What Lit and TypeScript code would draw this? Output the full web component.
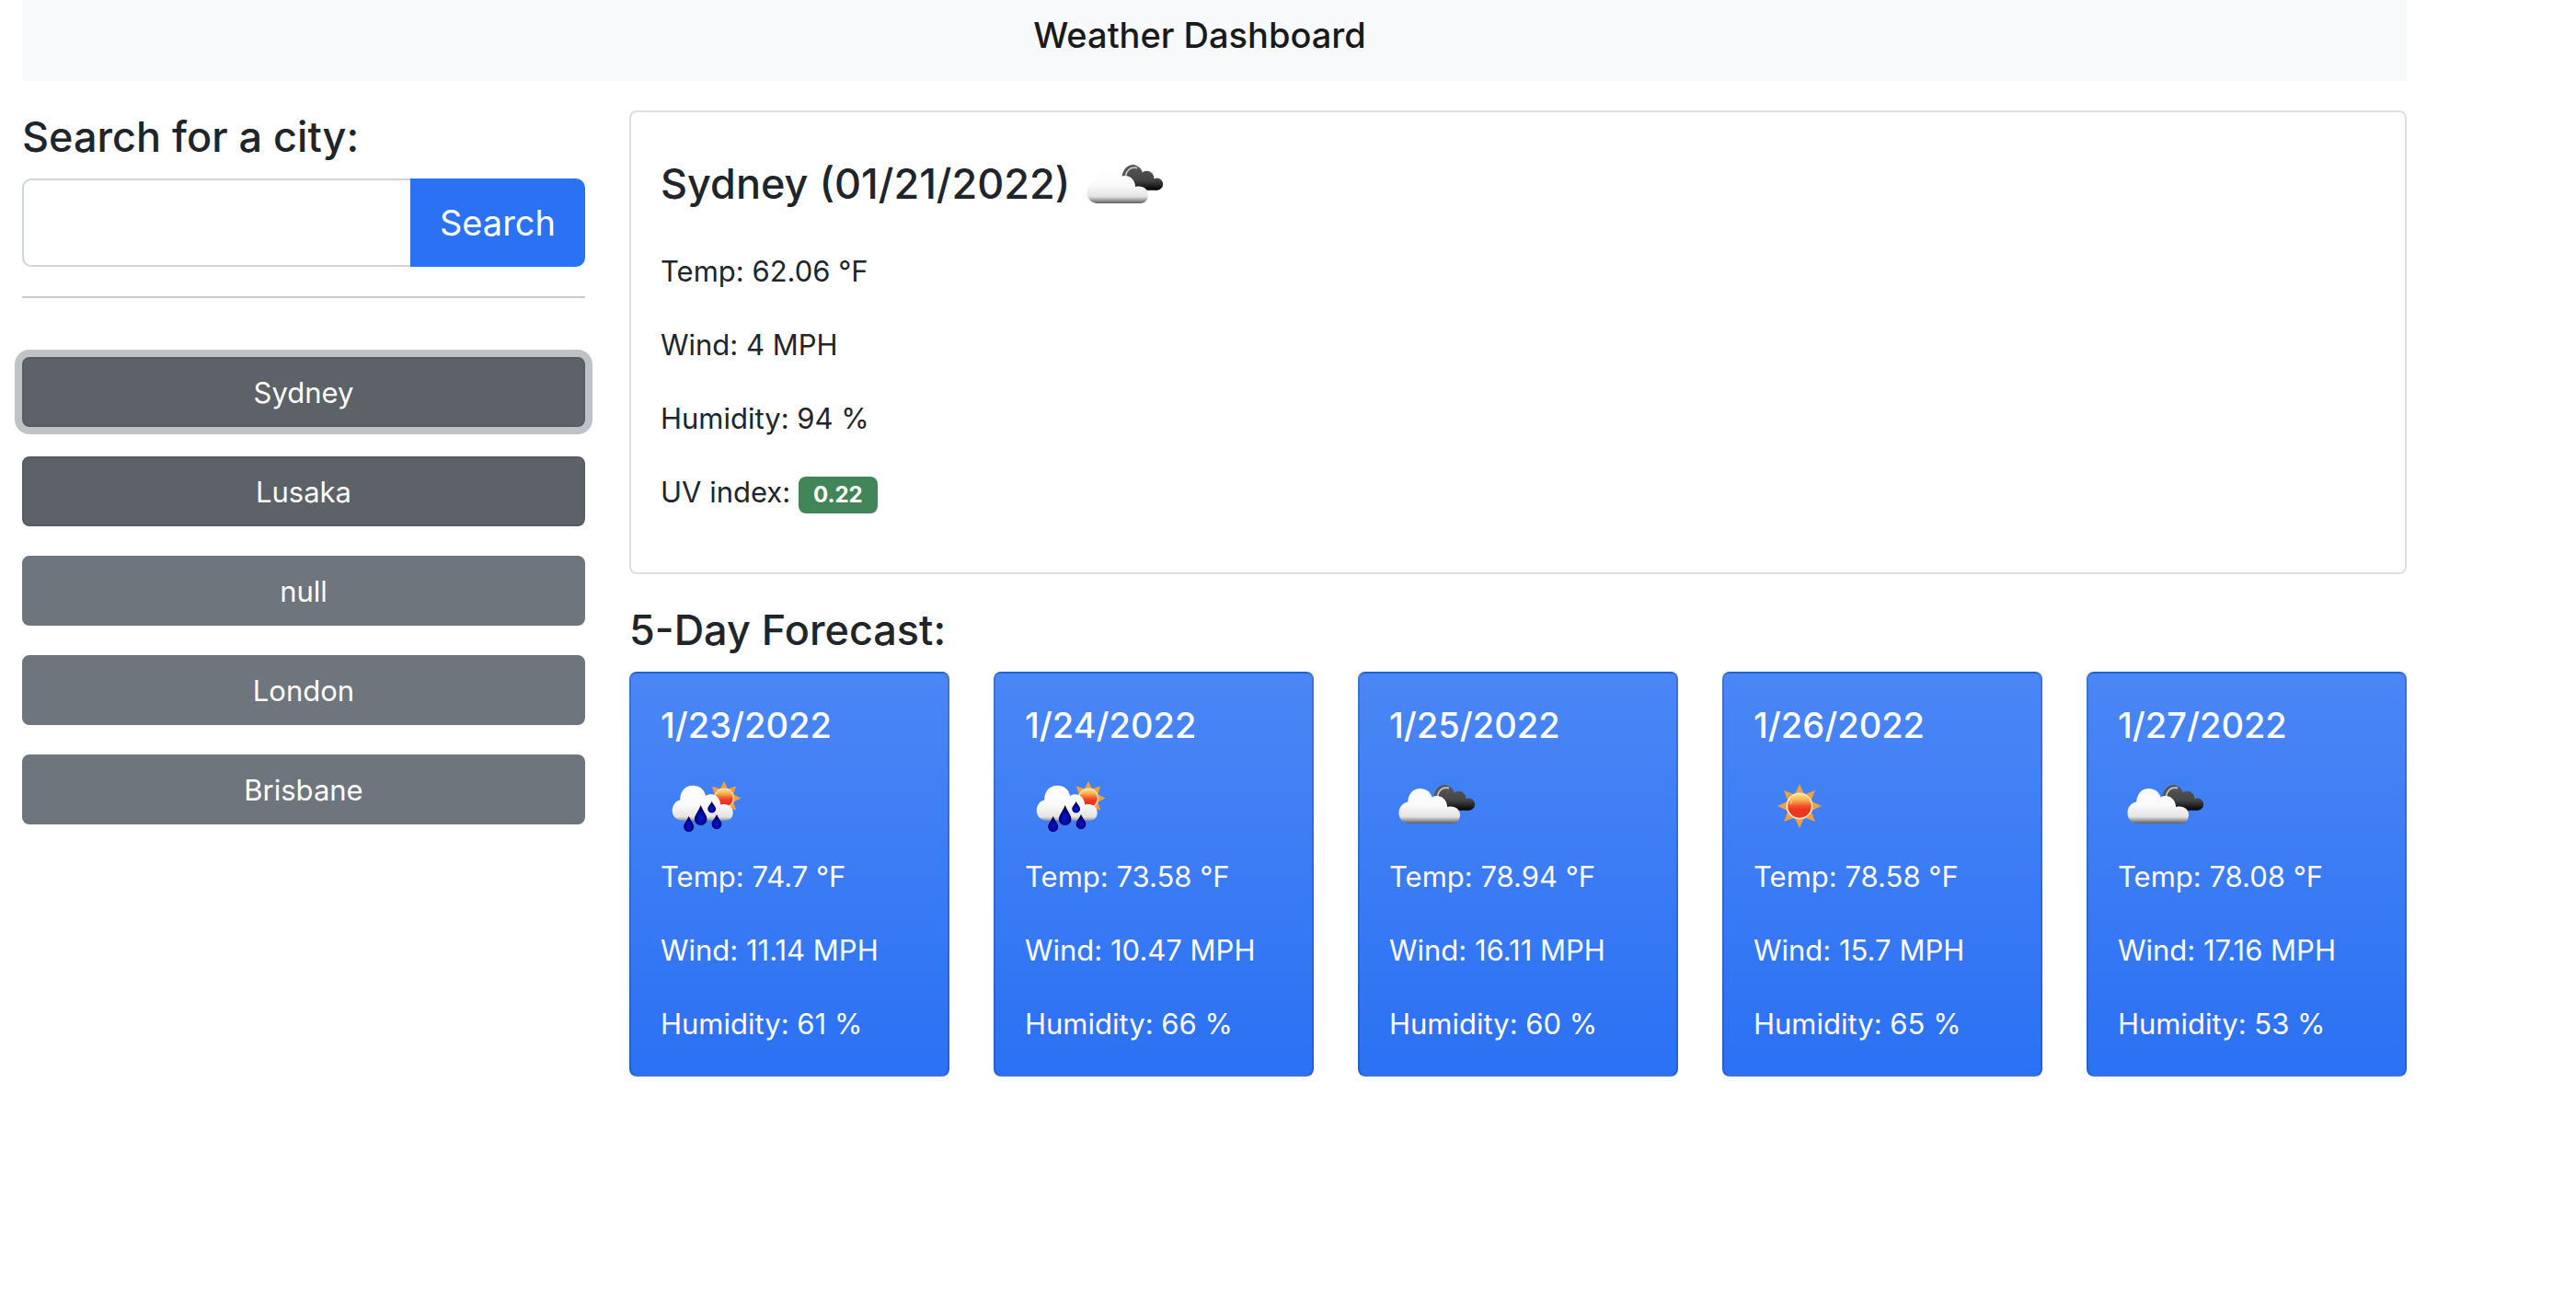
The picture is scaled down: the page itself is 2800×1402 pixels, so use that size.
import { LitElement, html, svg, css } from "lit";
import { customElement, property, state } from "lit/decorators.js";
import { classMap } from "lit/directives/class-map.js";

type Condition = "clouds" | "rain" | "clear";

interface ForecastDay {
  date: string;
  condition: Condition;
  temp: string;
  wind: string;
  humidity: string;
}

const CITIES = ["Sydney", "Lusaka", "null", "London", "Brisbane"];

const FORECAST: ForecastDay[] = [
  { date: "1/23/2022", condition: "rain", temp: "74.7", wind: "11.14", humidity: "61" },
  { date: "1/24/2022", condition: "rain", temp: "73.58", wind: "10.47", humidity: "66" },
  { date: "1/25/2022", condition: "clouds", temp: "78.94", wind: "16.11", humidity: "60" },
  { date: "1/26/2022", condition: "clear", temp: "78.58", wind: "15.7", humidity: "65" },
  { date: "1/27/2022", condition: "clouds", temp: "78.08", wind: "17.16", humidity: "53" },
];

/** Points of an eight-rayed star drawn behind the sun's disc. */
function rays(cx: number, cy: number, outer: number, inner: number): string {
  const points: string[] = [];
  for (let i = 0; i < 16; i++) {
    const r = i % 2 === 0 ? outer : inner;
    const a = (i * Math.PI) / 8;
    points.push(`${(cx + r * Math.sin(a)).toFixed(1)},${(cy - r * Math.cos(a)).toFixed(1)}`);
  }
  return points.join(" ");
}

/** A rain drop whose tip is at (x, top) and whose round end has radius r. */
function drop(x: number, top: number, bottom: number, r: number) {
  const cy = bottom - r;
  const bend = top + (cy - top) * 0.45;
  return svg`
    <path d="M${x} ${top} C${x + r * 0.4} ${bend} ${x + r} ${cy - r * 0.6} ${x + r} ${cy}
      A${r} ${r} 0 0 1 ${x - r} ${cy} C${x - r} ${cy - r * 0.6} ${x - r * 0.4} ${bend} ${x} ${top} Z"
      fill="url(#drop)" />`;
}

@customElement("weather-icon")
export class WeatherIcon extends LitElement {
  @property() condition: Condition = "clear";

  static styles = css`
    :host {
      display: inline-block;
      width: 100px;
      height: 100px;
      vertical-align: middle;
    }
    .icon {
      display: block;
      width: 100%;
      height: 100%;
    }
  `;

  private defs() {
    return svg`
      <defs>
        <linearGradient id="white" gradientUnits="userSpaceOnUse" x1="0" y1="26" x2="0" y2="67">
          <stop offset="0" stop-color="#ffffff" />
          <stop offset="0.5" stop-color="#fbfbfb" />
          <stop offset="0.82" stop-color="#e4e4e4" />
          <stop offset="0.92" stop-color="#9a9a9a" />
          <stop offset="1" stop-color="#5e5e5e" />
        </linearGradient>
        <linearGradient id="dark" gradientUnits="userSpaceOnUse" x1="0" y1="25" x2="0" y2="53">
          <stop offset="0" stop-color="#5a5a5a" />
          <stop offset="0.6" stop-color="#444444" />
          <stop offset="0.85" stop-color="#1c1c1c" />
          <stop offset="1" stop-color="#000000" />
        </linearGradient>
        <linearGradient id="disc" x1="0" y1="0" x2="0" y2="1">
          <stop offset="0" stop-color="#fbe08a" />
          <stop offset="0.25" stop-color="#f8b04a" />
          <stop offset="0.5" stop-color="#f0542c" />
          <stop offset="0.65" stop-color="#ee3524" />
          <stop offset="1" stop-color="#ee3524" />
        </linearGradient>
        <radialGradient id="drop" cx="0.5" cy="0.65" r="0.5">
          <stop offset="0" stop-color="#0018d0" />
          <stop offset="0.5" stop-color="#0008a8" />
          <stop offset="1" stop-color="#02004e" />
        </radialGradient>
        <filter id="soft" x="-10%" y="-10%" width="120%" height="120%">
          <feGaussianBlur stdDeviation="0.6" />
        </filter>
      </defs>`;
  }

  private clouds() {
    return svg`
      <g filter="url(#soft)">
        <g fill="url(#dark)">
          <circle cx="61" cy="35.5" r="10" />
          <circle cx="75.5" cy="39.5" r="7.8" />
          <circle cx="86.5" cy="46.2" r="6.6" />
          <path d="M58 36 H76 L86.5 42 V52.8 H58 Z" />
        </g>
        <path d="M49.5 38.5 C51 30 56 25 63 26.5" fill="none" stroke="#555555" stroke-width="2.4" />
        <path d="M52.5 37 C54 31 58 27 65 28.5" fill="none" stroke="#c4c4c4" stroke-width="1.8" />
      </g>
      <g filter="url(#soft)">
        <path fill="url(#white)"
          d="M21.5 67 C14 66.5 10.3 61 10.5 55 C10.8 48.5 15 44.5 20.3 43.5
            C20.5 35 26 29 33.5 29 C40 29 44.8 32.5 46.5 38.5
            C53 35 62 38 63.2 49 C71 47 77 51.5 77 57.5 C77 63 74 67 68 67 Z" />
      </g>`;
  }

  private rain() {
    return svg`
      <g filter="url(#soft)">
        <polygon points=${rays(69, 39.5, 18.5, 11)} fill="#f0a03c" />
        <circle cx="69" cy="39.5" r="11" fill="#fbe3c4" />
        <circle cx="69" cy="39.5" r="9.8" fill="url(#disc)" />
      </g>
      <g filter="url(#soft)">
        <path fill="url(#white)"
          d="M23 63.7 C16 63 12.6 58 12.7 52.5 C13 46.5 16.5 42.5 21.3 41.5
            C20.8 32 27 25.7 35 25.7 C43 25.7 48 30.5 49 37
            C56 32.5 64.5 36.5 65.2 46.5 C72.5 44.5 78.7 48.5 78.7 55 C78.7 60.5 75.5 63.7 70 63.7 Z" />
        ${drop(30.7, 59, 76, 5.5)}
        ${drop(43.7, 47, 69, 6.8)}
        ${drop(55.7, 43, 55.6, 4.4)}
        ${drop(61, 57, 73.2, 5.4)}
      </g>`;
  }

  private clear() {
    return svg`
      <g filter="url(#soft)">
        <polygon points=${rays(50, 48, 24, 13.5)} fill="#f0a03c" />
        <circle cx="50" cy="48" r="14.6" fill="#fbe3c4" />
        <circle cx="50" cy="48" r="12.8" fill="url(#disc)" />
        <path d="M40.5 46 C41 41 44 38 48 37.5" fill="none" stroke="#fbc45c" stroke-width="1.6" />
      </g>`;
  }

  render() {
    const drawing =
      this.condition === "clouds" ? this.clouds() : this.condition === "rain" ? this.rain() : this.clear();
    return html`<svg class="icon" viewBox="0 0 100 100" aria-hidden="true">${this.defs()}${drawing}</svg>`;
  }
}

@customElement("app-root")
export class AppRoot extends LitElement {
  @state() private current = "Sydney";

  static styles = css`
    :host {
      display: block;
      min-height: 100vh;
      background: #ffffff;
      color: #212529;
      font-family: Inter, "Liberation Sans", sans-serif;
      font-size: 31px;
      line-height: 50px;
    }
    * {
      box-sizing: border-box;
    }
    h1,
    h2,
    h3,
    p {
      margin: 0;
    }
    .container {
      max-width: 2640px;
      padding: 0 24px;
    }
    .navbar {
      display: flex;
      justify-content: center;
      padding: 8px 0 20px;
      background: #f8f9fb;
    }
    .brand {
      margin-right: 32px;
      color: #191a1b;
      font-size: 38px;
      font-weight: 500;
      line-height: 60px;
    }
    .layout {
      display: grid;
      grid-template-columns: minmax(0, 612fr) minmax(0, 1932fr);
      gap: 48px;
      align-items: start;
      padding: 32px 0;
    }
    .heading {
      font-size: 45px;
      font-weight: 500;
      line-height: 58px;
    }
    .section-heading {
      margin-bottom: 16px;
    }
    .search {
      display: flex;
      height: 96px;
    }
    .search-input {
      flex: 1;
      min-width: 0;
      padding: 16px 32px;
      border: 2px solid #ced4da;
      border-right: 0;
      border-radius: 10px 0 0 10px;
      background: #ffffff;
      color: inherit;
      font: inherit;
      outline: none;
    }
    .search-button {
      padding: 16px 32px;
      border: 0;
      border-radius: 0 10px 10px 0;
      background: #2b71f4;
      color: #ffffff;
      font: inherit;
      font-size: 38px;
      line-height: 60px;
      cursor: pointer;
    }
    .divider {
      height: 2px;
      margin: 32px 0 64px;
      border: 0;
      background: #c8c9ca;
    }
    .history {
      display: grid;
      gap: 32px;
    }
    .city {
      height: 76px;
      padding: 2px 24px 0;
      border: 2px solid #6e757c;
      border-radius: 8px;
      background: #6e757c;
      color: #ffffff;
      font: inherit;
      cursor: pointer;
    }
    .city.visited {
      border-color: #575c63;
      background: #5d6168;
    }
    .city.current {
      box-shadow: 0 0 0 8px #bfc3c6;
    }
    .today {
      margin-bottom: 32px;
      padding: 32px;
      border: 2px solid #dfdfdf;
      border-radius: 8px;
    }
    .today-heading {
      margin-bottom: 16px;
    }
    .today-icon {
      margin-left: 8px;
    }
    .reading {
      margin-bottom: 30px;
    }
    .badge {
      display: inline-block;
      padding: 8px 16px;
      border-radius: 8px;
      background: #428559;
      color: #ffffff;
      font-size: 24px;
      font-weight: 700;
      line-height: 24px;
      vertical-align: baseline;
    }
    .forecast {
      display: grid;
      grid-template-columns: repeat(5, minmax(0, 1fr));
      gap: 48px;
    }
    .day {
      padding: 32px 32px 30px;
      border: 2px solid rgba(0, 0, 0, 0.14);
      border-radius: 8px;
      background: #2b71f4 linear-gradient(180deg, rgba(255, 255, 255, 0.15), rgba(255, 255, 255, 0));
      color: #ffffff;
      white-space: nowrap;
    }
    .day-date {
      margin-bottom: 16px;
      font-size: 38px;
      font-weight: 500;
      line-height: 48px;
    }
    .day-icon {
      display: block;
    }
    .day .reading:last-child {
      margin-bottom: 0;
    }
    @media (max-width: 1600px) {
      .layout {
        grid-template-columns: minmax(0, 1fr);
      }
      .forecast {
        grid-template-columns: repeat(auto-fill, minmax(348px, 1fr));
      }
    }
  `;

  private renderDay(day: ForecastDay) {
    return html`
      <article class="day">
        <h3 class="day-date">${day.date}</h3>
        <weather-icon class="day-icon" condition=${day.condition}></weather-icon>
        <p class="reading">Temp: ${day.temp} °F</p>
        <p class="reading">Wind: ${day.wind} MPH</p>
        <p class="reading">Humidity: ${day.humidity} %</p>
      </article>`;
  }

  render() {
    return html`
      <div class="container">
        <header class="navbar"><h1 class="brand">Weather Dashboard</h1></header>
        <div class="layout">
          <aside>
            <h2 class="heading section-heading"><label for="city">Search for a city:</label></h2>
            <form class="search" @submit=${(e: Event) => e.preventDefault()}>
              <input class="search-input" id="city" type="text" autocomplete="off" />
              <button class="search-button" type="submit">Search</button>
            </form>
            <hr class="divider" />
            <div class="history">
              ${CITIES.map(
                (city) => html`<button
                  type="button"
                  class=${classMap({
                    city: true,
                    current: city === this.current,
                    visited: city === this.current || city === "Lusaka",
                  })}
                  @click=${() => (this.current = city)}
                >${city}</button>`
              )}
            </div>
          </aside>
          <main>
            <section class="today">
              <h2 class="heading today-heading">${this.current} (01/21/2022)<weather-icon
                class="today-icon" condition="clouds"></weather-icon></h2>
              <p class="reading">Temp: 62.06 °F</p>
              <p class="reading">Wind: 4 MPH</p>
              <p class="reading">Humidity: 94 %</p>
              <p class="reading">UV index: <span class="badge">0.22</span></p>
            </section>
            <section>
              <h2 class="heading section-heading">5-Day Forecast:</h2>
              <div class="forecast">${FORECAST.map((day) => this.renderDay(day))}</div>
            </section>
          </main>
        </div>
      </div>`;
  }
}
